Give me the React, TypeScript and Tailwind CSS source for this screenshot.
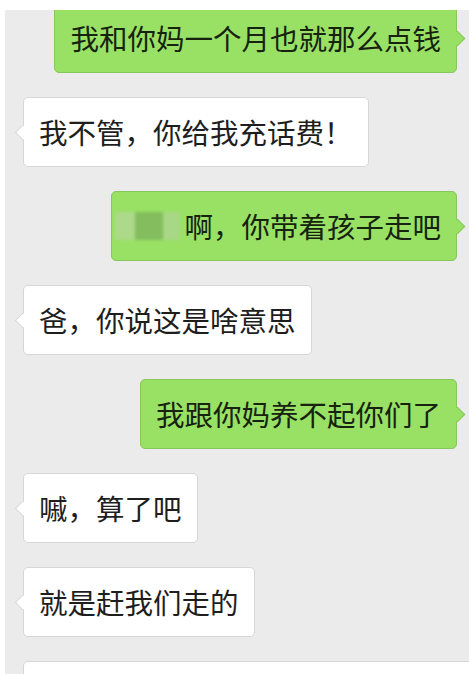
import React from "react";

const font = { fontFamily: '"Noto Sans CJK SC", "Noto Sans", sans-serif' };

function Left({ children }: { children?: React.ReactNode }) {
  return (
    <div className="flex justify-start pl-[18px]">
      <div className="relative h-[70px] flex items-center rounded-[5px] border border-[#d6d6d6] bg-white pl-[15px] pr-[15px] text-[28.5px] leading-none text-[#1e1e1e] whitespace-nowrap">
        <span className="absolute left-[-7px] top-[29px] h-[11px] w-[11px] rotate-45 border-b border-l border-[#d6d6d6] bg-white" />
        <span className="relative">{children}</span>
      </div>
    </div>
  );
}

function Right({ children }: { children?: React.ReactNode }) {
  return (
    <div className="flex justify-end pr-[12px]">
      <div className="relative h-[70px] flex items-center rounded-[5px] border border-[#86c95a] bg-[#98e165] pl-[15px] pr-[15px] text-[28.5px] leading-none text-[#17220f] whitespace-nowrap">
        <span className="absolute right-[-7px] top-[29px] h-[11px] w-[11px] rotate-45 border-t border-r border-[#86c95a] bg-[#98e165]" />
        <span className="relative flex items-center">{children}</span>
      </div>
    </div>
  );
}

export default function App() {
  return (
    <div className="h-[674px] w-[469px] overflow-hidden bg-white pt-[10px] pl-[5px]" style={font}>
      <div className="h-full w-full overflow-hidden bg-[#ebebeb]">
        <div className="mt-[-7px] flex flex-col gap-[24px]">
          <Right>我和你妈一个月也就那么点钱</Right>
          <Left>我不管，你给我充话费！</Left>
          <Right>
            <span className="ml-[-12px] inline-flex h-[28px] w-[69px] items-stretch blur-[1.5px]">
              <span className="w-[20px] bg-[#acd98a]" />
              <span className="w-[28px] bg-[#84bd5d]" />
              <span className="w-[17px] bg-[#a8d786]" />
            </span>
            <span>啊，你带着孩子走吧</span>
          </Right>
          <Left>爸，你说这是啥意思</Left>
          <Right>我跟你妈养不起你们了</Right>
          <Left>嘁，算了吧</Left>
          <Left>就是赶我们走的</Left>
          <div className="flex justify-start pl-[18px]">
            <div className="h-[70px] w-[470px] shrink-0 rounded-[5px] border border-[#d6d6d6] bg-white" />
          </div>
        </div>
      </div>
    </div>
  );
}
